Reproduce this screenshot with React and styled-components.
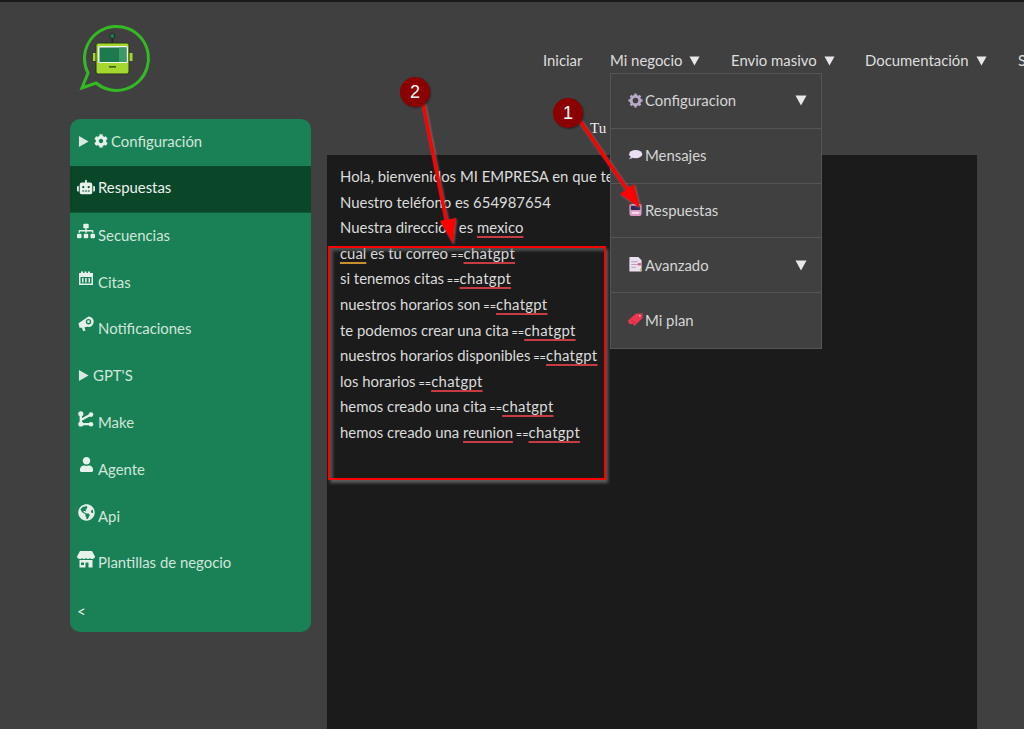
import React from "react";
import styled, { createGlobalStyle } from "styled-components";
import { FaCog, FaRobot, FaSitemap, FaUser, FaGlobeAmericas } from "react-icons/fa";

const Global = createGlobalStyle`
  html, body { margin: 0; padding: 0; height: 100%; overflow: hidden; background: #404040; }
  #root { height: 100%; }
`;

const Page = styled.div`
  position: relative;
  width: 1024px;
  height: 729px;
  overflow: hidden;
  box-sizing: border-box;
  border-top: 2px solid #1a1a1a;
  background: #404040;
  color: #e6e6e6;
  font-family: Lato, "Liberation Sans", sans-serif;
  font-size: 14.9px;
`;

const Header = styled.header`
  display: flex;
  height: 117px;
  padding-left: 79px;
`;

const Logo = styled.svg`
  width: 72px;
  height: 72px;
  margin-top: 20px;
  flex: none;
`;

const Nav = styled.nav`
  display: flex;
  margin-left: 392px;
  padding-top: 48px;
  white-space: nowrap;
  height: 20px;
  line-height: 18px;
`;

const NavLink = styled.span`
  display: inline-flex;
  align-items: center;
  gap: 7px;
  width: ${(p) => p.$w}px;
  flex: none;
  color: #dedede;
`;

const Caret = styled.svg`
  width: ${(p) => p.$s || 11}px;
  height: ${(p) => p.$s || 11}px;
  flex: none;
  fill: ${(p) => p.$fill || "#e8e8e8"};
`;

const Body = styled.div`
  display: flex;
  align-items: flex-start;
  padding-left: 70px;
`;

const Sidebar = styled.aside`
  width: 241px;
  height: 513px;
  flex: none;
  background: #198155;
  border-radius: 10px;
  overflow: hidden;
  color: #d6e8df;
`;

const SideItem = styled.div`
  display: flex;
  align-items: center;
  height: 46.8px;
  box-sizing: border-box;
  padding: 0 0 2.5px ${(p) => (p.$caret ? 8 : 7)}px;
  gap: 3px;
  background: ${(p) => (p.$active ? "#094728" : "transparent")};
  color: ${(p) => (p.$active ? "#eef2ef" : "#d3e6dc")};
  border-bottom: ${(p) => (p.$active ? "1px solid #0f5a36" : "none")};
`;

const SideIcon = styled.span`
  display: inline-flex;
  justify-content: center;
  width: ${(p) => p.$w || 18}px;
  flex: none;
  font-size: ${(p) => p.$size || 16}px;
  transform: translateY(${(p) => -(p.$lift || 0)}px);
  color: #e6f1eb;
`;

const SideCaret = styled.span`
  display: inline-flex;
  width: 12px;
  flex: none;
`;

const SideGlyph = styled.svg`
  width: 1em;
  height: 1em;
  fill: currentColor;
`;

const CollapseRow = styled.div`
  padding: 14px 0 0 7px;
  font-size: 15px;
  line-height: 20px;
  color: #e8efeb;
`;

const Main = styled.main`
  position: relative;
  margin-left: 16px;
  width: 650px;
`;

const Title = styled.div`
  padding-left: 263px;
  font-family: "Liberation Serif", serif;
  font-size: 15px;
  line-height: 18px;
  height: 36px;
  color: #eee;
`;

const Panel = styled.div`
  background: #1b1b1b;
  height: 580px;
  padding: 9px 13px;
  box-sizing: border-box;
  overflow: hidden;
`;

const Line = styled.div`
  height: 25.6px;
  line-height: 25.6px;
  white-space: nowrap;
  color: #dcdcdc;
`;

const Misspelled = styled.span`
  text-decoration: underline;
  text-decoration-color: ${(p) => (p.$warn ? "#c8902e" : "#c63c42")};
  text-decoration-thickness: 2px;
  text-underline-offset: 3px;
  letter-spacing: ${(p) => p.$track || 0}px;
`;

const Equals = styled.span`
  font-size: 11px;
  line-height: 0;
`;

const Menu = styled.div`
  position: absolute;
  left: 610px;
  top: 71px;
  width: 212px;
  background: #404040;
  border: 1px solid #555;
  box-sizing: border-box;
  color: #d6d6d6;
`;

const MenuItem = styled.div`
  display: flex;
  align-items: center;
  height: 54.8px;
  box-sizing: border-box;
  padding: 0 14px 1.5px 17px;
  gap: 2px;
  border-bottom: ${(p) => (p.$last ? "none" : "1px solid #555")};
`;

const MenuLabel = styled.span`
  flex: 1;
`;

const MenuIcon = styled.svg`
  width: 15px;
  height: 15px;
  flex: none;
`;

const Overlay = styled.svg`
  position: absolute;
  left: 0;
  top: -2px;
  width: 1024px;
  height: 729px;
  pointer-events: none;
`;

const RedBox = styled.div`
  position: absolute;
  left: 328px;
  top: 244px;
  width: 278px;
  height: 234px;
  box-sizing: border-box;
  border: 2.5px solid #f00;
  box-shadow: 2px 3px 3px rgba(120, 120, 120, 0.7), inset 3px 3px 3px rgba(120, 120, 120, 0.55);
  pointer-events: none;
`;

const Badge = styled.div`
  position: absolute;
  left: ${(p) => p.$x}px;
  top: ${(p) => p.$y}px;
  width: 30px;
  height: 30px;
  border-radius: 50%;
  background: #8b0000;
  color: #fff;
  font-family: "Liberation Sans", sans-serif;
  font-size: 18px;
  line-height: 30px;
  text-align: center;
  box-shadow: 1px 1px 2px rgba(0, 0, 0, 0.4);
`;

const Tri = ({ s }) => (
  <Caret $s={s} viewBox="0 0 12 12"><path d="M0.5 1.5h11L6 11.5z" /></Caret>
);

const RightTri = () => (
  <Caret $s={11} $fill="#dbe8e1" viewBox="0 0 12 12"><path d="M1 0v12l10.5-6z" /></Caret>
);

const CalendarGlyph = () => (
  <SideGlyph viewBox="0 0 16 16">
    <path d="M1 3h2V1.5h2V3h1.5V1.5h2V3H10V1.5h2V3h3v12H1zm1.5 4v6.5h11V7zM4 8h1.5v4.5H4zm3.2 0h1.5v4.5H7.200zm3.300 0H12v4.500h-1.500z" fillRule="evenodd" />
  </SideGlyph>
);

const HornGlyph = () => (
  <SideGlyph viewBox="0 0 16 16">
    <path d="M10.500.500a5.200 5.200 0 1 1 0 10.400c-.4 0-.8 0-1.100-.1L6.500 11.300l1 3.200-2.400.8-1.200-3.600-2.400.1L.5 7.200zM10.500 3a2.700 2.700 0 1 0 0 5.400 2.700 2.700 0 0 0 0-5.400zm0 1.300a1.400 1.400 0 1 1 0 2.800 1.400 1.400 0 0 1 0-2.800z" fillRule="evenodd" />
  </SideGlyph>
);

const MakeGlyph = () => (
  <SideGlyph viewBox="0 0 16 16">
    <circle cx="2.800" cy="2.800" r="2.600" />
    <circle cx="13" cy="3.600" r="2.300" />
    <circle cx="2.800" cy="13" r="2.600" />
    <circle cx="13" cy="13.200" r="2.300" />
    <path d="M2.800 2.800v10.200L13 13.200M2.800 9L13 3.600" fill="none" stroke="currentColor" strokeWidth="2.300" />
  </SideGlyph>
);

const StoreGlyph = () => (
  <SideGlyph viewBox="0 0 18 18">
    <path d="M3 1h12l3 5.500c0 1.600-1.300 2.500-3 2.500-1 0-1.700-.4-2-1-.4.600-1.100 1-2 1s-1.600-.4-2-1c-.4.600-1.100 1-2 1s-1.600-.4-2-1c-.3.600-1 1-2 1-1.700 0-3-.9-3-2.500z" />
    <path d="M2.500 10h13v7.500h-4v-5h-3v5h-6zM4 12.500v2.500h3v-2.500z" fillRule="evenodd" />
  </SideGlyph>
);

const side = [
  { label: "Respuestas", icon: <FaRobot />, active: true, size: 18 },
  { label: "Secuencias", icon: <FaSitemap />, size: 18, lift: 4 },
  { label: "Citas", icon: <CalendarGlyph />, size: 16, lift: 4 },
  { label: "Notificaciones", icon: <HornGlyph />, size: 16, lift: 4 },
  { label: "GPT'S", caret: true },
  { label: "Make", icon: <MakeGlyph />, size: 16, lift: 3 },
  { label: "Agente", icon: <FaUser />, size: 15, lift: 4 },
  { label: "Api", icon: <FaGlobeAmericas />, size: 17, lift: 3 },
  { label: "Plantillas de negocio", icon: <StoreGlyph />, size: 18, lift: 3 },
];

const W = ({ children, warn, track }) => <Misspelled $warn={warn} $track={track}>{children}</Misspelled>;
const Gpt = () => (<><Equals> ==</Equals><W track={0.3}>chatgpt</W></>);

const lines = [
  <>Hola, bienvenidos MI EMPRESA en que te</>,
  <>Nuestro teléfono es 654987654</>,
  <>Nuestra dirección es <W>mexico</W></>,
  <><W warn>cual</W> es tu correo<Gpt /></>,
  <>si tenemos citas<Gpt /></>,
  <>nuestros horarios son<Gpt /></>,
  <>te podemos crear una cita<Gpt /></>,
  <>nuestros horarios disponibles<Gpt /></>,
  <>los horarios<Gpt /></>,
  <>hemos creado una cita<Gpt /></>,
  <>hemos creado una <W>reunion</W><Gpt /></>,
];

const icons = {
  gear: (
    <MenuIcon viewBox="0 0 16 16">
      <circle cx="8" cy="8" r="4.600" fill="none" stroke="#b9a9c9" strokeWidth="3.200" />
      <g stroke="#b9a9c9" strokeWidth="2.600">
        <path d="M8 .5v3M8 12.500v3M.5 8h3M12.500 8h3M2.700 2.700l2.100 2.100M11.200 11.200l2.100 2.100M2.700 13.300l2.100-2.100M11.200 4.800l2.100-2.100" />
      </g>
    </MenuIcon>
  ),
  bubble: (
    <MenuIcon viewBox="0 0 16 16">
      <ellipse cx="8.200" cy="7.600" rx="7" ry="4.400" fill="#ebdff2" />
      <path d="M3 10l-2 3 5-1.500z" fill="#d9c8e4" />
    </MenuIcon>
  ),
  robot: (
    <MenuIcon viewBox="0 0 16 16">
      <rect x="1.500" y="2" width="13" height="13" rx="2.500" fill="#dc9ac4" />
      <rect x="3" y="4" width="10" height="4.500" rx="1" fill="#2b2a55" />
      <rect x="4" y="10.500" width="8" height="2" fill="#f3e4ee" />
      <path d="M1 3h3M12 3h3" stroke="#e5484d" strokeWidth="1" />
    </MenuIcon>
  ),
  doc: (
    <MenuIcon viewBox="0 0 16 16">
      <path d="M1.500 0h9.500l3.500 3.500V15.500h-13z" fill="#ebe0ee" />
      <path d="M3.500 5h7M3.500 8h7M3.500 11h5" stroke="#b49bbd" strokeWidth="1" />
      <path d="M10.500 6.500h3.500v2.500h-3.500z" fill="#d35f86" />
      <path d="M13 12l2 1.500-2 1.500z" fill="#d9a93a" />
    </MenuIcon>
  ),
  ticket: (
    <MenuIcon viewBox="0 0 16 16">
      <path d="M0 9L8.500 1.500H15.500V6.500L7 15l-2-2.500-3.500.5z" fill="#f0354f" />
      <path d="M3.500 8.500l5 4" stroke="#b92a43" strokeWidth="1" />
      <circle cx="12.600" cy="4" r="1" fill="#f8c3cc" />
    </MenuIcon>
  ),
};

export default function App() {
  return (
    <Page>
      <Global />
      <Header>
        <Logo viewBox="0 0 72 72">
          <path d="M9 51A32 32 0 1 1 17 61L3 66Z" fill="none" stroke="#34b824" strokeWidth="3" />
          <path d="M32.500 14h1.500v7h-1.500z" fill="#222" />
          <circle cx="33.300" cy="14" r="2.600" fill="#17804f" stroke="#222" strokeWidth="1" />
          <rect x="14" y="31" width="3.500" height="8" fill="#a4d82f" />
          <rect x="50" y="31" width="3.500" height="8" fill="#a4d82f" />
          <rect x="17" y="21" width="33" height="31" rx="2" fill="#a4d82f" stroke="#263218" strokeWidth="1" />
          <rect x="19" y="24" width="30" height="17" rx="2" fill="#f0f4ea" />
          <rect x="20.500" y="25.500" width="27" height="14.500" fill="#1c7a4c" />
          <rect x="40" y="25.500" width="7.500" height="14.500" fill="#3b9a68" />
          <rect x="30" y="44" width="7" height="1.600" fill="#3f5a22" />
        </Logo>
        <Nav>
          <NavLink $w={67}>Iniciar</NavLink>
          <NavLink $w={121}>Mi negocio <Tri s={11} /></NavLink>
          <NavLink $w={134}>Envio masivo <Tri s={11} /></NavLink>
          <NavLink $w={153}>Documentación <Tri s={11} /></NavLink>
          <NavLink $w={10}>S</NavLink>
        </Nav>
      </Header>
      <Body>
        <Sidebar>
          <SideItem $caret>
            <SideCaret><RightTri /></SideCaret>
            <SideIcon $size={14} $w={15}><FaCog /></SideIcon>
            Configuración
          </SideItem>
          {side.map((s) => (
            <SideItem key={s.label} $active={s.active} $caret={s.caret}>
              {s.caret ? <SideCaret><RightTri /></SideCaret> : <SideIcon $size={s.size} $lift={s.lift}>{s.icon}</SideIcon>}
              {s.label}
            </SideItem>
          ))}
          <CollapseRow>&lt;</CollapseRow>
        </Sidebar>
        <Main>
          <Title>Tu</Title>
          <Panel>
            {lines.map((l, i) => <Line key={i}>{l}</Line>)}
          </Panel>
        </Main>
      </Body>
      <Menu>
        <MenuItem>{icons.gear}<MenuLabel>Configuracion</MenuLabel><Tri s={12} /></MenuItem>
        <MenuItem>{icons.bubble}<MenuLabel>Mensajes</MenuLabel></MenuItem>
        <MenuItem>{icons.robot}<MenuLabel>Respuestas</MenuLabel></MenuItem>
        <MenuItem>{icons.doc}<MenuLabel>Avanzado</MenuLabel><Tri s={12} /></MenuItem>
        <MenuItem $last>{icons.ticket}<MenuLabel>Mi plan</MenuLabel></MenuItem>
      </Menu>
      <RedBox />
      <Overlay viewBox="0 0 1024 729">
        <g fill="#f00" stroke="#f00" style={{ filter: "drop-shadow(1px 1px 1px rgba(150,150,150,.6))" }}>
          <path d="M580 121L629 192" strokeWidth="3.500" fill="none" />
          <path d="M640 208L620 194L634 184Z" stroke="none" />
          <path d="M423 103L447 224" strokeWidth="3.500" fill="none" />
          <path d="M453 244L440 221L456 218Z" stroke="none" />
        </g>
      </Overlay>
      <Badge $x={400} $y={75}>2</Badge>
      <Badge $x={553} $y={96}>1</Badge>
    </Page>
  );
}
